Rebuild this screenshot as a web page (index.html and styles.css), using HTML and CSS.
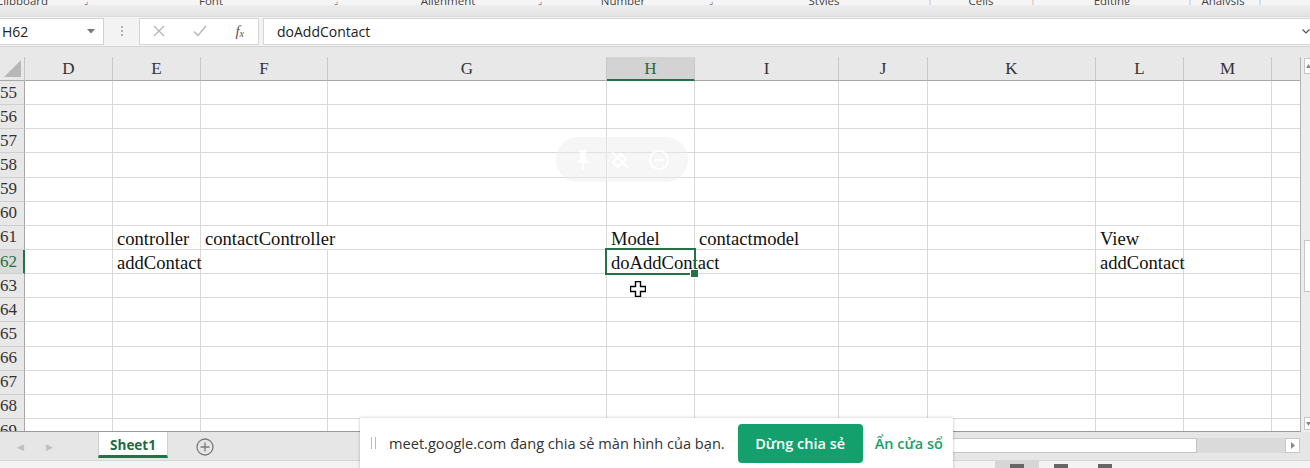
FILE: index.html
```html
<!DOCTYPE html>
<html>
<head>
<meta charset="utf-8">
<link rel="stylesheet" href="styles.css">
</head>
<body>
<div class="app">
  <div class="ribbon">
    <div class="labels">
      <span class="lb b44">Clipboard</span>
      <span class="lb b84 dl">⌟</span>
      <span class="lb b166">Font</span>
      <span class="lb b84 dl">⌟</span>
      <span class="lb b140">Alignment</span>
      <span class="lb b44 dl">⌟</span>
      <span class="lb b122">Number</span>
      <span class="lb b54 dl">⌟</span>
      <span class="lb b172">Styles</span>
      <span class="lb b40 sep">|</span>
      <span class="lb b62">Cells</span>
      <span class="lb b42 sep">|</span>
      <span class="lb b116">Editing</span>
      <span class="lb b40 sep">|</span>
      <span class="lb b26">Analysis</span>
      <span class="lb b48 sep">|</span>
    </div>
    <div class="shade"></div>
  </div>

  <div class="fbar">
    <div class="namebox">
      <span class="nb-text">H62</span>
      <svg class="nb-arrow" width="8" height="5" viewBox="0 0 8 5"><path d="M0 0 H8 L4 4.5 Z" fill="#777"/></svg>
    </div>
    <div class="dots"><i></i><i></i><i></i></div>
    <div class="fbtns">
      <svg width="12" height="12" viewBox="0 0 12 12"><path d="M1 1 L11 11 M11 1 L1 11" stroke="#b5b5b5" stroke-width="1.3"/></svg>
      <svg width="14" height="12" viewBox="0 0 14 12"><path d="M1 6.5 L5 10.5 L13 1" stroke="#b5b5b5" stroke-width="1.3" fill="none"/></svg>
      <span class="fx">f<sub>x</sub></span>
    </div>
    <div class="finput">
      <span>doAddContact</span>
      <svg class="chev" width="8" height="5" viewBox="0 0 8 5"><path d="M0.5 0.5 L4 4 L7.5 0.5" stroke="#555" stroke-width="1.2" fill="none"/></svg>
    </div>
  </div>

  <div class="gap"></div>

  <div class="sheet">
    <div class="grid">
      <div class="corner"><svg width="17" height="17" viewBox="0 0 17 17"><path d="M17 0 V17 H0 Z" fill="#b7b7b7"/></svg></div>
      <div class="ch">D</div><div class="ch">E</div><div class="ch">F</div><div class="ch">G</div><div class="ch on">H</div><div class="ch">I</div><div class="ch">J</div><div class="ch">K</div><div class="ch">L</div><div class="ch">M</div><div class="ch"></div>

      <div class="rh"><span>55</span></div><div class="c"></div><div class="c"></div><div class="c"></div><div class="c"></div><div class="c"></div><div class="c"></div><div class="c"></div><div class="c"></div><div class="c"></div><div class="c"></div><div class="c"></div>
      <div class="rh"><span>56</span></div><div class="c"></div><div class="c"></div><div class="c"></div><div class="c"></div><div class="c"></div><div class="c"></div><div class="c"></div><div class="c"></div><div class="c"></div><div class="c"></div><div class="c"></div>
      <div class="rh"><span>57</span></div><div class="c"></div><div class="c"></div><div class="c"></div><div class="c"></div><div class="c"></div><div class="c"></div><div class="c"></div><div class="c"></div><div class="c"></div><div class="c"></div><div class="c"></div>
      <div class="rh"><span>58</span></div><div class="c"></div><div class="c"></div><div class="c"></div><div class="c"></div><div class="c"></div><div class="c"></div><div class="c"></div><div class="c"></div><div class="c"></div><div class="c"></div><div class="c"></div>
      <div class="rh"><span>59</span></div><div class="c"></div><div class="c"></div><div class="c"></div><div class="c"></div><div class="c"></div><div class="c"></div><div class="c"></div><div class="c"></div><div class="c"></div><div class="c"></div><div class="c"></div>
      <div class="rh"><span>60</span></div><div class="c"></div><div class="c"></div><div class="c"></div><div class="c"></div><div class="c"></div><div class="c"></div><div class="c"></div><div class="c"></div><div class="c"></div><div class="c"></div><div class="c"></div>
      <div class="rh"><span>61</span></div><div class="c"></div><div class="c">controller</div><div class="c nob">contactController</div><div class="c"></div><div class="c">Model</div><div class="c">contactmodel</div><div class="c"></div><div class="c"></div><div class="c">View</div><div class="c"></div><div class="c"></div>
      <div class="rh sel-row"><span>62</span></div><div class="c"></div><div class="c">addContact</div><div class="c"></div><div class="c"></div><div class="c sel">doAddContact</div><div class="c"></div><div class="c"></div><div class="c"></div><div class="c">addContact</div><div class="c"></div><div class="c"></div>
      <div class="rh"><span>63</span></div><div class="c"></div><div class="c"></div><div class="c"></div><div class="c"></div><div class="c"></div><div class="c"></div><div class="c"></div><div class="c"></div><div class="c"></div><div class="c"></div><div class="c"></div>
      <div class="rh"><span>64</span></div><div class="c"></div><div class="c"></div><div class="c"></div><div class="c"></div><div class="c"></div><div class="c"></div><div class="c"></div><div class="c"></div><div class="c"></div><div class="c"></div><div class="c"></div>
      <div class="rh"><span>65</span></div><div class="c"></div><div class="c"></div><div class="c"></div><div class="c"></div><div class="c"></div><div class="c"></div><div class="c"></div><div class="c"></div><div class="c"></div><div class="c"></div><div class="c"></div>
      <div class="rh"><span>66</span></div><div class="c"></div><div class="c"></div><div class="c"></div><div class="c"></div><div class="c"></div><div class="c"></div><div class="c"></div><div class="c"></div><div class="c"></div><div class="c"></div><div class="c"></div>
      <div class="rh"><span>67</span></div><div class="c"></div><div class="c"></div><div class="c"></div><div class="c"></div><div class="c"></div><div class="c"></div><div class="c"></div><div class="c"></div><div class="c"></div><div class="c"></div><div class="c"></div>
      <div class="rh"><span>68</span></div><div class="c"></div><div class="c"></div><div class="c"></div><div class="c"></div><div class="c"></div><div class="c"></div><div class="c"></div><div class="c"></div><div class="c"></div><div class="c"></div><div class="c"></div>
      <div class="rh"><span>69</span></div><div class="c"></div><div class="c"></div><div class="c"></div><div class="c"></div><div class="c"></div><div class="c"></div><div class="c"></div><div class="c"></div><div class="c"></div><div class="c"></div><div class="c"></div>
    </div>
    <div class="vscroll">
      <div class="vbtn top"><svg width="5" height="4" viewBox="0 0 5 4"><path d="M0 4 L2.5 0 L5 4Z" fill="#888"/></svg></div>
      <div class="vthumb"></div>
      <div class="vbtn bot"><svg width="5" height="4" viewBox="0 0 5 4"><path d="M0 0 L2.5 4 L5 0Z" fill="#888"/></svg></div>
    </div>

    <div class="floatbar">
      <svg width="18" height="22" viewBox="0 0 18 22"><path d="M5 1 H13 V3 H12 V10 L15 13 V14 H10 V21 H8 V14 H3 V13 L6 10 V3 H5 Z" fill="#fff"/></svg>
      <svg width="22" height="22" viewBox="0 0 22 22"><path d="M4 13 L12 5 L17 10 L9 18 Z M3 3 L19 19" stroke="#fff" stroke-width="2" fill="none"/></svg>
      <svg width="22" height="22" viewBox="0 0 22 22"><circle cx="11" cy="11" r="9" stroke="#fff" stroke-width="2" fill="none"/><path d="M6 11 H16" stroke="#fff" stroke-width="2"/></svg>
    </div>
    <svg class="cursor" width="16" height="16" viewBox="0 0 16 16"><path d="M5.5 0.5 H10.5 V5.5 H15.5 V10.5 H10.5 V15.5 H5.5 V10.5 H0.5 V5.5 H5.5 Z" fill="#fff" stroke="#000" stroke-width="1.4"/></svg>
  </div>

  <div class="tabbar">
    <div class="nav"><span>◀</span><span>▶</span></div>
    <div class="tab">Sheet1</div>
    <div class="addsheet"><svg width="18" height="18" viewBox="0 0 18 18"><circle cx="9" cy="9" r="8" stroke="#7a7a7a" stroke-width="1.3" fill="none"/><path d="M9 4.5 V13.5 M4.5 9 H13.5" stroke="#7a7a7a" stroke-width="1.3"/></svg></div>
    <div class="hspace"></div>
    <div class="hscroll">
      <div class="hthumb"></div>
      <div class="htrack"></div>
      <div class="hbtn"><svg width="4" height="7" viewBox="0 0 4 7"><path d="M0 0 L4 3.5 L0 7Z" fill="#888"/></svg></div>
    </div>
  </div>
  <div class="status">
    <div class="views"><span class="vw on"><i></i></span><span class="vw"><i></i></span><span class="vw"><i></i></span></div>
  </div>

  <div class="meet">
    <span class="handle"><i></i><i></i></span>
    <span class="mtext">meet.google.com đang chia sẻ màn hình của bạn.</span>
    <button class="stop">Dừng chia sẻ</button>
    <span class="hide">Ẩn cửa sổ</span>
  </div>
</div>
</body>
</html>
```

FILE: styles.css
```css
* { box-sizing: border-box; }
html, body { margin: 0; padding: 0; }
body { width: 1310px; height: 468px; overflow: hidden; background: #f3f3f3; font-family: "Open Sans", "Liberation Sans", sans-serif; }
.app { position: relative; width: 1310px; height: 468px; overflow: hidden; }

/* ribbon */
.ribbon { height: 17px; background: #f5f5f5; }
.labels { height: 5px; overflow: hidden; display: flex; align-items: flex-end; font-size: 11.5px; line-height: 12px; color: #444; white-space: nowrap; }
.lb { flex: none; display: flex; justify-content: center; margin-bottom: -2px; }
.b26 { width: 26px; }
.b40 { width: 40px; }
.b42 { width: 42px; }
.b44 { width: 44px; }
.b48 { width: 48px; }
.b54 { width: 54px; }
.b62 { width: 62px; }
.b84 { width: 84px; }
.b116 { width: 116px; }
.b122 { width: 122px; }
.b140 { width: 140px; }
.b166 { width: 166px; }
.b172 { width: 172px; }
.dl { font-size: 9px; color: #777; }
.sep { color: #bbb; }
.shade { height: 12px; background: linear-gradient(#ededed, #e3e3e3); border-bottom: 1px solid #dcdcdc; }

/* formula bar */
.fbar { height: 29px; display: flex; align-items: center; background: #f3f3f3; padding-bottom: 1px; }
.namebox { width: 104px; height: 27px; background: #fff; border: 1px solid #d2d2d2; border-left: none; display: flex; align-items: center; justify-content: space-between; padding: 0 8px 0 2px; font-size: 14px; color: #222; }
.dots { width: 35px; display: flex; flex-direction: column; align-items: center; gap: 2px; }
.dots i { width: 2px; height: 2px; background: #b0b0b0; display: block; }
.fbtns { width: 120px; height: 27px; background: #fff; border: 1px solid #d6d6d6; display: flex; align-items: center; justify-content: space-between; padding: 0 14px 0 13px; }
.fx { font-family: "Liberation Serif", serif; font-style: italic; font-size: 15px; color: #555; line-height: 1; }
.fx sub { font-size: 10px; vertical-align: -1px; }
.finput { flex: 1; margin-left: 4px; height: 27px; background: #fff; border: 1px solid #d6d6d6; border-right: none; display: flex; align-items: center; justify-content: space-between; padding: 0 0 0 13px; font-size: 14px; color: #222; }

.gap { height: 11px; background: #e8e8e8; border-top: 1px solid #d4d4d4; }

/* sheet */
.sheet { position: relative; height: 375px; display: flex; background: #e8e8e8; }
.grid { width: 1301px; height: 375px; overflow: hidden; display: grid; grid-template-columns: 25px 88px 88px 127px 279px 88px 144px 89px 168px 88px 88px 29px; grid-template-rows: 24px; grid-auto-rows: 24.15px; background: #fff; border-right: 1px solid #b4b4b4; border-bottom: 1px solid #9a9a9a; align-content: start; }
.corner { background: #e8e8e8; border-right: 1px solid #c4c4c4; border-bottom: 1px solid #a8a8a8; display: flex; align-items: flex-end; justify-content: flex-end; padding: 0 3px 3px 0; }
.corner svg { display: block; }
.ch { background: #e8e8e8; border-right: 1px solid #c8c8c8; border-bottom: 1px solid #a8a8a8; display: flex; align-items: center; justify-content: center; font-family: "Liberation Serif", serif; font-size: 17px; color: #333; padding-top: 1px; }
.ch.on { background: #d3d3d3; color: #1d6b43; border-bottom: 2px solid #217346; }
.rh { background: #e8e8e8; border-right: 1px solid #a8a8a8; border-bottom: 1px solid #cfcfcf; display: flex; align-items: center; justify-content: flex-end; overflow: hidden; font-family: "Liberation Serif", serif; font-size: 17px; color: #333; padding-right: 7px; white-space: nowrap; }
.rh span { flex: none; }
.rh.sel-row { background: #dadada; color: #217346; border-right: 2px solid #217346; padding-right: 6px; }
.c { border-right: 1px solid #d9d9d9; border-bottom: 1px solid #d9d9d9; font-family: "Liberation Serif", serif; font-size: 18.6px; line-height: 20px; color: #111; white-space: nowrap; padding-left: 4px; display: flex; align-items: flex-end; position: relative; }
.c.nob { border-right-color: transparent; }
.c.sel::after { content: ""; position: absolute; left: -2px; top: -2px; right: -2px; bottom: -2px; border: 2px solid #217346; z-index: 2; }
.c.sel::before { content: ""; position: absolute; right: -5px; bottom: -5px; width: 7px; height: 7px; background: #217346; border: 1px solid #fff; z-index: 3; }

.vscroll { width: 9px; position: relative; background: #ededed; display: flex; flex-direction: column; padding-left: 3px; padding-top: 1px; }
.vbtn { width: 7px; height: 16px; background: #fff; border: 1px solid #c6c6c6; border-right: none; display: flex; align-items: center; justify-content: center; }
.vthumb { width: 7px; height: 52px; background: #fff; border: 1px solid #c6c6c6; border-right: none; margin-top: 166px; }
.vbtn.bot { margin-top: auto; margin-bottom: 2px; height: 13px; }

.floatbar { position: absolute; left: 556px; top: 80px; width: 132px; height: 45px; border-radius: 23px; background: rgba(236,236,236,0.6); display: flex; align-items: center; justify-content: space-around; padding: 0 10px; opacity: 0.8; }
.cursor { position: absolute; left: 630px; top: 224px; }

/* tabs */
.tabbar { height: 28px; display: flex; align-items: stretch; background: #e6e6e6; }
.nav { width: 98px; display: flex; align-items: center; gap: 22px; padding-left: 17px; font-size: 9px; color: #c0c0c0; }
.tab { width: 70px; background: #fff; border-bottom: 3px solid #217346; border-left: 1px solid #cfcfcf; border-right: 1px solid #cfcfcf; display: flex; align-items: center; justify-content: center; font-weight: 700; font-size: 13.5px; color: #1d6b43; margin-bottom: 2px; padding-top: 2px; }
.addsheet { width: 74px; display: flex; align-items: center; justify-content: center; padding-top: 1px; }
.hspace { flex: 1; }
.hscroll { width: 360px; display: flex; align-items: center; padding-bottom: 2px; }
.hthumb { width: 247px; height: 15px; background: #fff; border: 1px solid #c6c6c6; }
.htrack { flex: 1; height: 15px; background: #dadada; }
.hbtn { width: 15px; height: 15px; background: #fff; border: 1px solid #c6c6c6; display: flex; align-items: center; justify-content: center; margin-right: 10px; }

.status { height: 8px; background: #f3f3f3; border-top: 1px solid #d6d6d6; display: flex; }
.views { margin-left: 995px; display: flex; }
.vw { width: 44px; height: 8px; display: flex; justify-content: center; padding-top: 3px; }
.vw.on { background: #d6d6d6; }
.vw i { width: 14px; height: 5px; background: #666; display: block; }

/* meet */
.meet { position: absolute; left: 360px; top: 418px; width: 593px; height: 56px; background: #fff; box-shadow: 0 0 3px rgba(0,0,0,0.25); display: flex; align-items: center; padding: 0 0 6px 11px; }
.handle { display: flex; gap: 3px; margin-right: 13px; }
.handle i { width: 1px; height: 12px; background: #bbb; display: block; }
.mtext { font-size: 14.6px; color: #333; white-space: nowrap; }
.stop { margin-left: 13px; width: 125px; height: 39px; border: none; border-radius: 4px; background: #14a06c; color: #fff; font-family: "Open Sans", sans-serif; font-size: 14.5px; font-weight: 600; }
.hide { margin-left: 12px; color: #18a06a; font-size: 14.5px; font-weight: 600; white-space: nowrap; }
```
